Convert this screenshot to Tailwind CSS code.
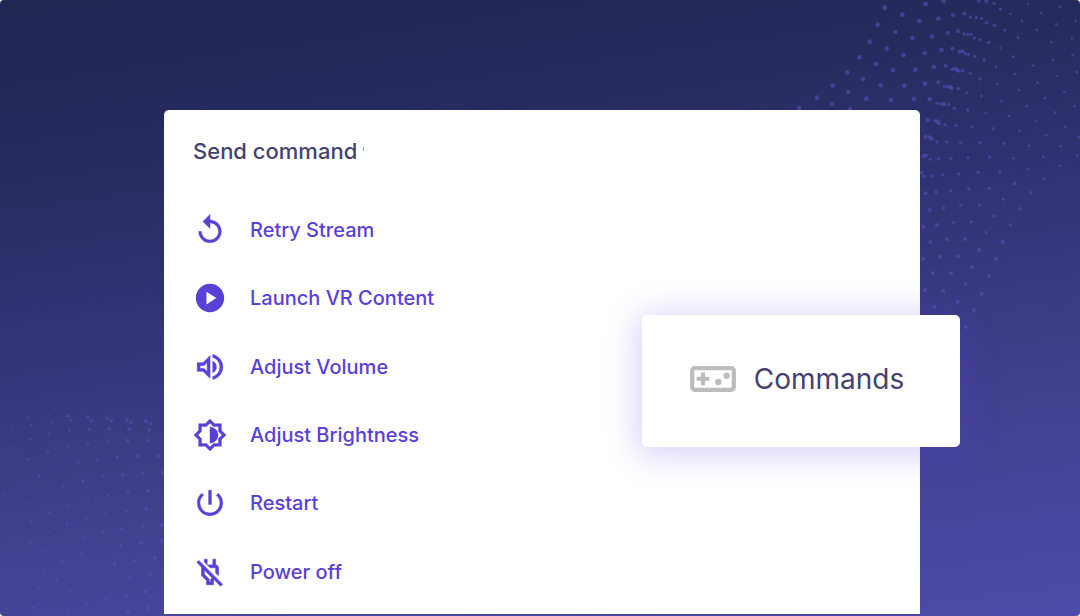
<!DOCTYPE html>
<html lang="en">

<head>
   <meta charset="UTF-8">
   <meta name="viewport" content="width=device-width, initial-scale=1.0">
   <title>Send command</title>
   <script src="https://cdn.jsdelivr.net/npm/@tailwindcss/browser@4"></script>
</head>

<body class="bg-white font-['Inter',sans-serif]">
   <main class="relative flex flex-col min-h-screen overflow-hidden rounded-sm pt-[110px] pb-0.5 pl-41 pr-40 bg-[linear-gradient(172deg,#222653_0%,#262b5e_22%,#2f3272_40%,#3c3d86_62%,#46459a_82%,#4d4ba9_100%)]">

      <!-- dotted waves -->
      <svg id="waveRight" class="absolute top-0 right-0 w-[300px] h-[360px] fill-[#5850bb]/60" viewBox="0 0 900 1080" aria-hidden="true"></svg>
      <svg id="waveLeft" class="absolute bottom-0 left-0 w-[180px] h-[236px] fill-[#6058cc]/40" viewBox="0 0 540 708" aria-hidden="true"></svg>

      <section class="relative flex flex-col flex-1 rounded-t-[5px] bg-white pl-[29px] pb-2">
         <div class="flex items-center h-[82px]">
            <h1 class="text-[22px] leading-7 font-medium text-[#45426f]">Send command</h1>
            <span class="w-px h-1 ml-1.5 mb-1 bg-[#45426f]/50"></span>
         </div>

         <div class="grid flex-1 auto-rows-fr justify-items-start mt-1 text-xl font-medium text-[#5b40d6]">
            <button type="button" class="flex items-center gap-[23px] cursor-pointer">
               <svg class="w-[34px] h-[34px] fill-current stroke-current stroke-[0.3px]" viewBox="0 0 24 24" aria-hidden="true">
                  <path d="M12 5V1L7 6l5 5V7c3.31 0 6 2.69 6 6s-2.69 6-6 6-6-2.69-6-6H4c0 4.42 3.58 8 8 8s8-3.58 8-8-3.58-8-8-8z" />
               </svg>
               Retry Stream
            </button>
            <button type="button" class="flex items-center gap-[23px] cursor-pointer">
               <svg class="w-[34px] h-[34px] fill-current" viewBox="0 0 24 24" aria-hidden="true">
                  <path d="M12 2C6.48 2 2 6.48 2 12s4.48 10 10 10 10-4.48 10-10S17.52 2 12 2zM9.5 16.5v-9l7 4.5z" />
               </svg>
               Launch VR Content
            </button>
            <button type="button" class="flex items-center gap-[23px] cursor-pointer">
               <svg class="w-[34px] h-[34px] fill-current stroke-current stroke-[0.4px]" viewBox="0 0 24 24" aria-hidden="true">
                  <path d="M3 9v6h4l5 5V4L7 9H3zm7-.17v6.34L7.83 13H5v-2h2.83L10 8.83z" fill-rule="evenodd" />
                  <path d="M16.5 12A4.5 4.5 0 0 0 14 7.970v8.05c1.48-.73 2.5-2.25 2.5-4.02zM14 3.23v2.06c2.89.86 5 3.54 5 6.71s-2.11 5.85-5 6.71v2.06c4.01-.91 7-4.49 7-8.77s-2.99-7.86-7-8.77z" />
               </svg>
               Adjust Volume
            </button>
            <button type="button" class="flex items-center gap-[23px] cursor-pointer">
               <svg class="w-[34px] h-[34px] fill-current stroke-current stroke-[0.3px]" viewBox="0 0 24 24" aria-hidden="true">
                  <path fill-rule="evenodd" d="M20 8.69V4h-4.69L12 .69 8.69 4H4v4.69L.69 12 4 15.31V20h4.69L12 23.31 15.31 20H20v-4.69L23.31 12 20 8.69zm-2 5.79V18h-3.52L12 20.48 9.52 18H6v-3.52L3.52 12 6 9.52V6h3.52L12 3.52 14.48 6H18v3.52L20.48 12 18 14.48zM12 6.3v11.4c3.150 0 5.7-2.550 5.7-5.7s-2.550-5.7-5.7-5.7z" />
               </svg>
               Adjust Brightness
            </button>
            <button type="button" class="flex items-center gap-[23px] cursor-pointer">
               <svg class="w-[34px] h-[34px] fill-current stroke-current stroke-[0.3px]" viewBox="0 0 24 24" aria-hidden="true">
                  <path d="M13 3h-2v10h2V3zm4.83 2.17l-1.42 1.42A6.92 6.92 0 0 1 19 12c0 3.87-3.13 7-7 7A6.995 6.995 0 0 1 7.58 6.58L6.17 5.17A8.932 8.932 0 0 0 3 12a9 9 0 0 0 18 0c0-2.74-1.23-5.18-3.17-6.83z" />
               </svg>
               Restart
            </button>
            <button type="button" class="flex items-center gap-[23px] cursor-pointer">
               <svg class="w-[34px] h-[34px] fill-current stroke-current stroke-[0.4px]" viewBox="0 0 24 24" aria-hidden="true">
                  <path d="M16 9v3.66l1.83 1.83.17-.19V9c0-1.1-.9-2-2-2V3h-2v4h-3.88l2 2H16zM10 3H8v1.88l2 2z" />
                  <path fill-rule="evenodd" d="M4.12 3.84L2.71 5.25 6 8.54v5.96L9.5 18v3h5v-3l.48-.48 4.47 4.47 1.41-1.41L4.12 3.84zM8 10.6l5.55 5.55-1.05 1.02V19h-1v-1.83L8 13.65V10.6z" />
               </svg>
               Power off
            </button>
         </div>

         <!-- floating card -->
         <button type="button" class="absolute top-[205px] -right-10 flex items-center justify-center gap-[18px] w-[318px] h-[132px] pr-2 pb-1 rounded-[5px] bg-white text-[28px] text-[#45426f] shadow-[0_4px_32px_4px_#5b40e640] cursor-pointer">
            <svg class="w-[46px] h-[26px]" viewBox="0 0 46 26" aria-hidden="true">
               <rect x="2.2" y="2.2" width="41.6" height="21.6" rx="2.5" fill="none" stroke="#bdbdbd" stroke-width="4.2" />
               <path d="M11 6.5h4v4.3h4.3v4H15v4.4h-4v-4.4H6.7v-4H11z" fill="#bdbdbd" />
               <circle cx="28.3" cy="16" r="3.2" fill="#bdbdbd" />
               <circle cx="36.7" cy="9.7" r="3.2" fill="#bdbdbd" />
            </svg>
            Commands
         </button>
      </section>
   </main>

   <script>
      // x, y pairs, grouped by dot radius
      const rightDots = {
         7: [314, 23, 293, 74, 269, 125, 238, 172, 201, 217, 158, 257, 111, 293, 58, 324, 437, 12, 491, 4, 367, 44, 418, 63, 475, 56, 346, 96, 397, 114, 456, 109, 320, 145, 371, 165, 434, 159, 484, 150, 288, 192, 339, 211, 406, 209, 461, 201, 249, 237, 302, 256, 373, 257, 435, 251, 205, 276, 259, 296, 333, 300, 402, 297, 449, 297, 156, 312, 210, 328, 443, 360, 530, 209, 511, 261, 491, 312, 473, 365, 454, 416, 432, 468],
         6: [519, 45, 503, 98, 517, 146, 497, 197, 475, 247, 553, 41, 534, 94, 596, 2, 619, 3, 548, 154, 538, 155, 436, 410, 425, 518, 436, 580, 449, 629, 430, 680, 471, 675, 451, 727, 501, 718, 555, 717, 429, 777, 481, 770, 534, 769, 598, 750, 458, 820, 513, 820, 577, 802, 434, 871, 490, 872, 557, 853, 627, 829, 464, 921, 533, 905, 605, 881, 582, 931, 557, 982, 647, 777, 668, 725],
         5: [571, 51, 589, 53, 605, 55, 619, 68, 642, 10, 661, 27, 643, 76, 563, 103, 573, 103, 552, 102, 583, 114, 601, 118, 626, 127, 556, 161, 565, 163, 584, 169, 613, 179, 516, 208, 522, 205, 536, 213, 547, 213, 571, 220, 600, 237, 493, 259, 502, 260, 516, 265, 535, 265, 471, 310, 483, 312, 506, 313, 523, 325, 465, 362, 478, 371, 495, 374, 528, 377, 577, 380, 447, 410, 471, 426, 500, 426, 542, 427, 599, 427, 440, 466, 451, 478, 476, 476, 513, 475, 564, 473, 629, 471, 432, 529, 456, 528, 489, 525, 536, 522, 594, 517, 660, 517, 468, 576, 512, 572, 566, 566, 627, 565, 704, 551, 491, 624, 542, 616, 599, 614, 670, 598, 753, 578, 521, 667, 574, 665, 642, 648, 719, 626, 618, 698, 691, 675, 563, 330, 640, 386, 671, 430],
         4: [691, 42, 744, 12, 783, 39, 841, 21, 726, 62, 674, 91, 770, 90, 829, 73, 887, 62, 714, 113, 661, 144, 814, 127, 875, 115, 700, 170, 760, 197, 818, 180, 878, 166, 648, 200, 704, 222, 773, 248, 830, 228, 891, 216, 652, 253, 717, 271, 604, 288, 665, 302, 560, 278, 795, 295, 853, 276, 740, 319, 617, 339, 687, 349, 769, 363, 825, 338, 883, 319, 718, 393, 799, 406, 855, 380, 747, 437, 842, 439, 897, 412, 701, 475, 790, 470, 891, 466, 744, 508, 840, 498, 793, 536]
      };
      const leftDots = {
         6: [438, 123, 453, 131, 380, 119, 394, 127, 321, 115, 335, 123, 262, 111, 203, 107, 447, 149, 387, 147, 444, 182, 383, 182, 473, 227, 413, 228, 428, 280, 489, 277, 444, 332, 439, 386, 486, 434, 483, 483, 424, 490, 449, 585, 436, 635, 444, 685, 385, 694, 465, 533],
         5: [352, 231, 384, 337, 379, 393, 428, 439, 362, 497, 344, 550, 405, 541, 390, 593, 319, 658, 378, 646, 369, 284, 249, 303, 274, 122, 214, 121, 328, 146, 268, 148, 365, 447, 308, 457],
         4: [144, 107, 84, 112, 155, 127, 94, 135, 208, 153, 148, 162, 89, 178, 323, 184, 264, 190, 205, 200, 144, 216, 86, 237, 233, 249, 292, 239, 308, 290, 117, 287, 191, 321, 324, 345, 264, 357, 207, 375, 318, 402, 149, 398, 201, 434, 94, 424, 249, 471, 260, 414, 192, 491, 91, 485, 137, 515, 245, 524, 185, 544, 286, 564, 271, 618, 212, 635, 170, 601, 114, 624, 258, 673, 100, 682, 330, 603, 203, 691, 130, 570],
         3: [24, 121, 35, 149, 32, 199, 32, 263, 62, 313, 10, 344, 174, 266, 81, 370, 28, 401, 42, 457, 146, 457, 40, 515, 81, 544, 30, 573, 75, 596, 62, 653, 10, 685]
      };

      function drawDots(id, groups) {
         let circles = "";
         for (const r in groups) {
            const p = groups[r];
            for (let i = 0; i < p.length; i += 2) {
               circles += `<circle cx="${p[i]}" cy="${p[i + 1]}" r="${r}" />`;
            }
         }
         document.getElementById(id).innerHTML = circles;
      }

      drawDots("waveRight", rightDots);
      drawDots("waveLeft", leftDots);
   </script>
</body>

</html>
